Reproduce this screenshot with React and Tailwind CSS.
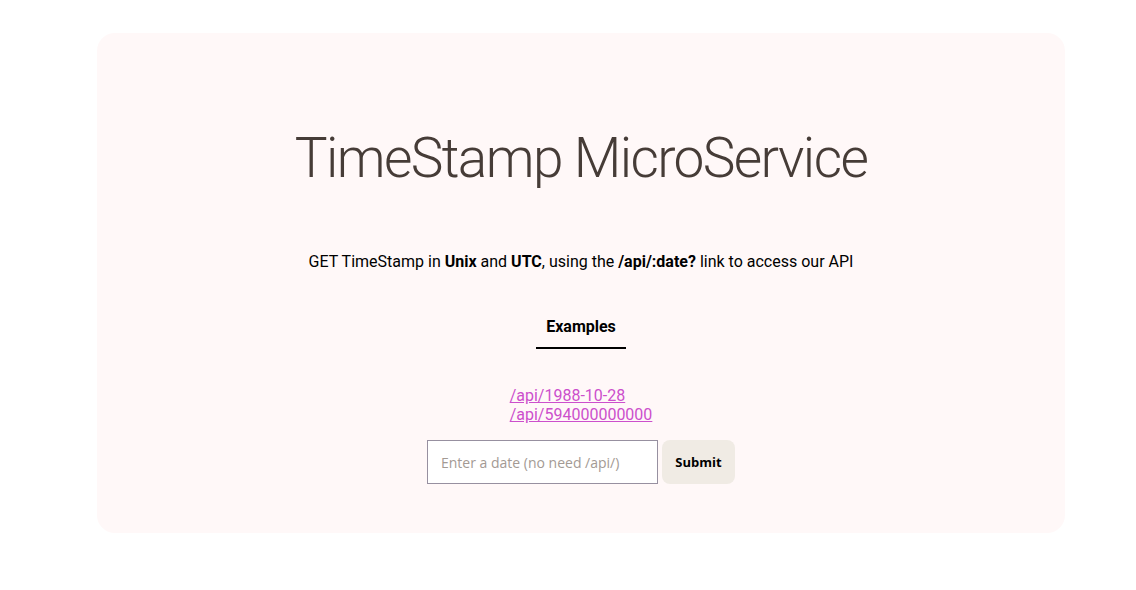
import React, { useState } from 'react';

// Timestamp microservice landing card
const EXAMPLES = ['/api/1988-10-28', '/api/594000000000'];

const App = () => {
  const [date, setDate] = useState('');

  return (
    <div className="min-h-[590px] w-[1136px] bg-white pt-[33px] font-['Roboto',sans-serif]">
      <div className="ml-[97px] flex w-[968px] flex-col items-center rounded-[18px] bg-[#fff8f8] pt-[89px] pb-[49px]">
        {/* Title */}
        <h1 className="text-[55px] leading-[72px] font-light tracking-[-1.6px] text-[#463c37]">
          TimeStamp MicroService
        </h1>

        {/* Subtitle */}
        <p className="mt-[56px] text-[16px] leading-[24px] text-black">
          GET TimeStamp in <b>Unix</b> and <b>UTC</b>, using the <b>/api/:date?</b> link to access our API
        </p>

        {/* Examples heading */}
        <h3 className="mt-[41px] text-[16px] leading-[24px] font-bold text-black">Examples</h3>
        <div className="mt-[8px] h-[2px] w-[90px] bg-black" />

        {/* Example links */}
        <div className="mt-[37px] flex flex-col items-start text-[16px] leading-[19px]">
          {EXAMPLES.map((ex) => (
            <a key={ex} href={ex} className="text-[#cc4fcc] underline">
              {ex}
            </a>
          ))}
        </div>

        {/* Form */}
        <form
          className="mt-[16px] flex gap-[4px]"
          onSubmit={(e) => e.preventDefault()}
        >
          <input
            type="text"
            value={date}
            onChange={(e) => setDate(e.target.value)}
            placeholder="Enter a date (no need /api/)"
            className="h-[44px] w-[231px] border border-[#9790a0] bg-white px-[13px] text-[14px] font-['Open_Sans',sans-serif] text-black outline-none placeholder:text-[#a39a94]"
          />
          <button
            type="submit"
            className="h-[44px] w-[73px] rounded-[8px] bg-[#f0ebe4] pt-[1px] text-[13px] font-bold font-['Open_Sans',sans-serif] text-black"
          >
            Submit
          </button>
        </form>
      </div>
    </div>
  );
};

export default App;
